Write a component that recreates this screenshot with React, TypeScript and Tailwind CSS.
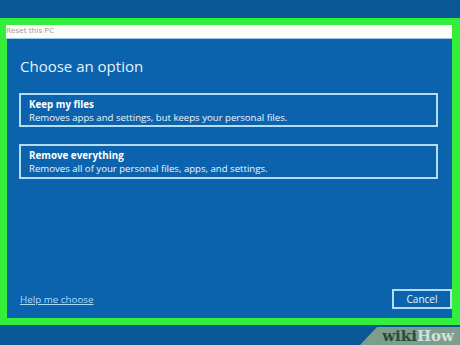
import React from "react";

export default function App() {
  const font = { fontFamily: '"Open Sans", "Noto Sans", sans-serif' };
  return (
    <div className="relative w-[460px] h-[345px] bg-[#0a5896] flex flex-col overflow-hidden" style={font}>
      <div className="h-[18px] shrink-0" />
      <div className="h-[307px] shrink-0 border-[#33ee3a] border-l-[7px] border-t-[7px] border-r-[8px] border-b-[7px] flex flex-col">
        <div className="h-[14px] shrink-0 bg-[#fdfdf8] text-[8px] leading-[10px] text-[#9a9a9a] -ml-[1px] overflow-hidden border-b border-[#9cc8ea]">
          Reset this PC
        </div>
        <div className="flex-1 bg-[#0b63ae] flex flex-col pl-[12px] pr-[14px] pt-[16px] pb-[9px]">
          <div className="text-[15px] leading-[22px] text-[#e6f2fb] ml-[1px]">Choose an option</div>
          <div className="mt-[16px] flex flex-col gap-[17px]">
            <div className="h-[34px] border-[2px] border-[#b4dcf4] px-[8px] pt-[3px] flex flex-col">
              <div className="text-[9.8px] leading-[13px] font-bold text-white">Keep my files</div>
              <div className="text-[9.6px] leading-[13px] text-[#eef6fb]">Removes apps and settings, but keeps your personal files.</div>
            </div>
            <div className="h-[35px] border-[2px] border-[#b4dcf4] px-[8px] pt-[3px] flex flex-col">
              <div className="text-[9.8px] leading-[13px] font-bold text-white">Remove everything</div>
              <div className="text-[9.6px] leading-[13px] text-[#eef6fb]">Removes all of your personal files, apps, and settings.</div>
            </div>
          </div>
          <div className="flex-1" />
          <div className="flex items-end justify-between">
            <div className="text-[9.8px] leading-[14px] text-[#a9dcf8] underline pb-[2px] ml-[1px]">Help me choose</div>
            <div className="w-[60px] h-[20px] border-[2px] border-[#b4dcf4] flex items-center justify-center text-[10px] text-[#eef6fb] -mr-[14px]">
              Cancel
            </div>
          </div>
        </div>
      </div>
      <div className="flex-1" />
      <div
        className="absolute right-0 bottom-0 h-[18px] w-[100px] bg-[#7c9e8b] flex items-center justify-end pr-[6px]"
        style={{ clipPath: "polygon(17px 0, 100% 0, 100% 100%, 0 100%)" }}
      >
        <span className="text-[15px] font-bold leading-none" style={{ fontFamily: '"DejaVu Serif", serif' }}>
          <span className="text-[#2c4a3a]">wiki</span>
          <span className="text-[#cfe0e4]">How</span>
        </span>
      </div>
    </div>
  );
}
